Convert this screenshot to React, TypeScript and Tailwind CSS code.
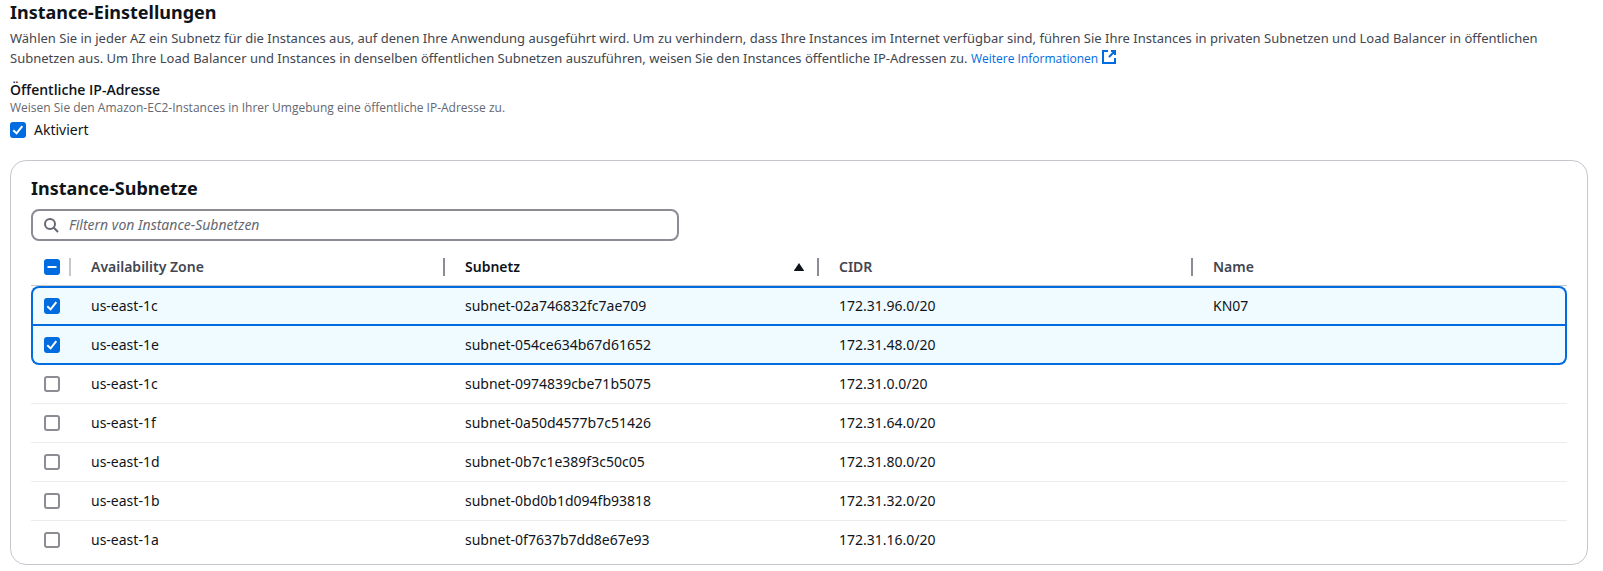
import { useState } from "react";

type Subnet = { zone: string; id: string; cidr: string; name: string };

const subnets: Subnet[] = [
  { zone: "us-east-1c", id: "subnet-02a746832fc7ae709", cidr: "172.31.96.0/20", name: "KN07" },
  { zone: "us-east-1e", id: "subnet-054ce634b67d61652", cidr: "172.31.48.0/20", name: "" },
  { zone: "us-east-1c", id: "subnet-0974839cbe71b5075", cidr: "172.31.0.0/20", name: "" },
  { zone: "us-east-1f", id: "subnet-0a50d4577b7c51426", cidr: "172.31.64.0/20", name: "" },
  { zone: "us-east-1d", id: "subnet-0b7c1e389f3c50c05", cidr: "172.31.80.0/20", name: "" },
  { zone: "us-east-1b", id: "subnet-0bd0b1d094fb93818", cidr: "172.31.32.0/20", name: "" },
  { zone: "us-east-1a", id: "subnet-0f7637b7dd8e67e93", cidr: "172.31.16.0/20", name: "" },
];

type CheckboxProps = {
  id?: string;
  label?: string;
  checked: boolean;
  mixed?: boolean;
  onChange: () => void;
};

function Checkbox({ id, label, checked, mixed = false, onChange }: CheckboxProps) {
  const filled = checked || mixed;
  return (
    <span className="relative block size-4 shrink-0">
      <input
        id={id}
        type="checkbox"
        aria-label={label}
        checked={checked}
        ref={(el) => {
          if (el) el.indeterminate = mixed;
        }}
        onChange={onChange}
        className={
          filled
            ? "block size-4 appearance-none rounded-[3px] bg-[#006ce0]"
            : "block size-4 appearance-none rounded-[3px] border-2 border-[#8c8c94] bg-white"
        }
      />
      {filled && (
        <svg viewBox="0 0 16 16" className="pointer-events-none absolute inset-0 size-4" fill="none" stroke="#fff" strokeWidth="2">
          {mixed ? <path d="M3.5 8h9" /> : <path d="M3.3 8.3 6.6 11.4 12.3 4.2" />}
        </svg>
      )}
    </span>
  );
}

const headings = ["Availability Zone", "Subnetz", "CIDR", "Name"];

export default function App() {
  const [publicIp, setPublicIp] = useState(true);
  const [selected, setSelected] = useState<boolean[]>(subnets.map((_, i) => i < 2));
  const count = selected.filter(Boolean).length;
  const all = count === subnets.length;

  return (
    <main className="bg-white pr-[15px] pl-2.5 font-['Noto_Sans',sans-serif] text-sm/5 text-[#0f141a]">
      <h2 className="text-lg/6 font-bold">Instance-Einstellungen</h2>
      <p className="mt-1 text-[13px]/5 text-[#424650]">
        Wählen Sie in jeder AZ ein Subnetz für die Instances aus, auf denen Ihre Anwendung ausgeführt wird. Um zu
        verhindern, dass Ihre Instances im Internet verfügbar sind, führen Sie Ihre Instances in privaten Subnetzen und
        Load Balancer in öffentlichen Subnetzen aus. Um Ihre Load Balancer und Instances in denselben öffentlichen
        Subnetzen auszuführen, weisen Sie den Instances öffentliche IP-Adressen zu.{" "}
        <a href="#weitere-informationen" className="font-['Open_Sans',sans-serif] text-xs/4 text-[#006ce0]">
          Weitere Informationen{" "}
          <svg viewBox="0 0 16 16" className="inline-block size-4 align-[-2px]" fill="none" stroke="currentColor" strokeWidth="2">
            <path d="M10 2h4v4M8 8l6-6M14 9v5H2V2h5" />
          </svg>
        </a>
      </p>

      <section className="mt-3">
        <h3 className="font-['Open_Sans',sans-serif] font-semibold">Öffentliche IP-Adresse</h3>
        <p className="font-['Open_Sans',sans-serif] text-xs/4 text-[#656871]">
          Weisen Sie den Amazon-EC2-Instances in Ihrer Umgebung eine öffentliche IP-Adresse zu.
        </p>
        <div className="mt-1 flex items-center gap-2">
          <Checkbox id="public-ip" checked={publicIp} onChange={() => setPublicIp(!publicIp)} />
          <label htmlFor="public-ip">Aktiviert</label>
        </div>
      </section>

      <section className="mt-5 rounded-2xl border border-[#c6c6cd] px-5 pt-[15px] pb-1">
        <h2 className="text-lg/6 font-bold">Instance-Subnetze</h2>
        <div className="mt-[9px] flex h-8 max-w-[648px] items-center gap-2.5 rounded-lg border-2 border-[#8c8c94] pr-2 pl-2.5">
          <svg viewBox="0 0 16 16" className="size-4 shrink-0" fill="none" stroke="#656871" strokeWidth="2">
            <circle cx="7" cy="7" r="5" />
            <path d="m10.8 10.8 4.2 4.2" />
          </svg>
          <input
            type="search"
            aria-label="Filtern von Instance-Subnetzen"
            placeholder="Filtern von Instance-Subnetzen"
            className="min-w-0 flex-1 outline-none placeholder:text-[#656871] placeholder:italic"
          />
        </div>

        <table className="mt-[7px] w-full table-fixed border-separate border-spacing-0 text-left">
          <thead>
            <tr className="h-[38px]">
              <th className="relative w-10 border-b border-[#c6c6cd] p-0 pl-[13px]">
                <Checkbox
                  label="Alle auswählen"
                  checked={all}
                  mixed={count > 0 && !all}
                  onChange={() => setSelected(subnets.map(() => !all))}
                />
                <span className="absolute top-2.5 right-0 h-[18px] w-0.5 bg-[#c6c6cd]" />
              </th>
              {headings.map((h, i) => (
                <th
                  key={h}
                  aria-sort={i === 1 ? "ascending" : undefined}
                  className="relative border-b border-[#c6c6cd] py-0 pr-[15px] pl-5 font-semibold text-[#424650]"
                >
                  {i === 1 ? (
                    <button type="button" className="flex w-full items-center justify-between text-[#0f141a]">
                      {h}
                      <svg viewBox="0 0 10 8" className="h-2 w-2.5" fill="currentColor">
                        <path d="M5 0 10 7.4Q10 8 9.4 8H.6Q0 8 0 7.4Z" />
                      </svg>
                    </button>
                  ) : (
                    h
                  )}
                  {i < 3 && <span className="absolute top-2.5 right-0 h-[18px] w-0.5 bg-[#8c8c94]" />}
                </th>
              ))}
            </tr>
          </thead>
          <tbody>
            {subnets.map((s, i) => {
              const on = selected[i];
              const first = on && !selected[i - 1];
              const last = on && !selected[i + 1];
              const end = i === subnets.length - 1;
              const line = on
                ? first
                  ? "border-y-2 border-[#006ce0] bg-[#f0fbff]"
                  : "border-b-2 border-[#006ce0] bg-[#f0fbff]"
                : end
                  ? "border-b border-transparent"
                  : "border-b border-[#ebebf0]";
              const leftEdge = on
                ? `border-l-2 pl-[11px] ${first ? "rounded-tl-lg" : ""} ${last ? "rounded-bl-lg" : ""}`
                : "pl-[13px]";
              const rightEdge = on
                ? `border-r-2 ${first ? "rounded-tr-lg" : ""} ${last ? "rounded-br-lg" : ""}`
                : "";
              return (
                <tr key={s.id} className={first ? "h-10" : "h-[39px]"}>
                  <td className={`py-0 pr-0 ${line} ${leftEdge}`}>
                    <Checkbox
                      label={s.id}
                      checked={on}
                      onChange={() => setSelected(selected.map((v, j) => (j === i ? !v : v)))}
                    />
                  </td>
                  <td className={`py-0 pl-5 ${line}`}>{s.zone}</td>
                  <td className={`py-0 pl-5 ${line}`}>{s.id}</td>
                  <td className={`py-0 pl-5 ${line}`}>{s.cidr}</td>
                  <td className={`py-0 pl-5 ${line} ${rightEdge}`}>{s.name}</td>
                </tr>
              );
            })}
          </tbody>
        </table>
      </section>
    </main>
  );
}
